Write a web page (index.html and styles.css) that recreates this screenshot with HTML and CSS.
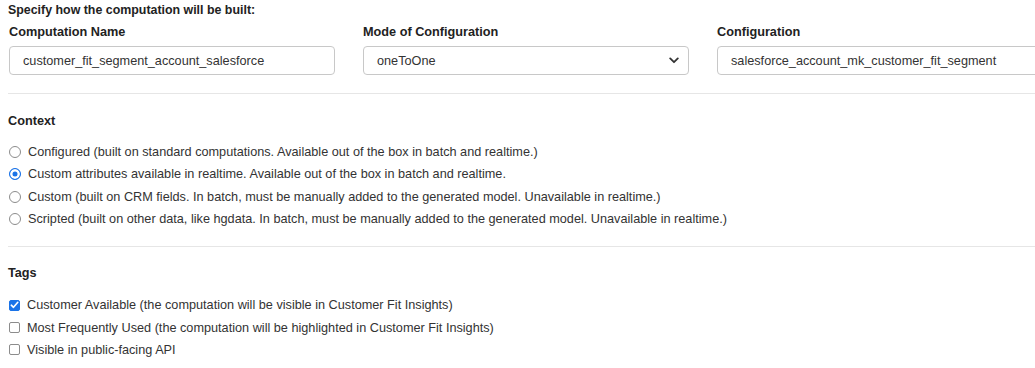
FILE: index.html
```html
<!DOCTYPE html>
<html>
<head>
<meta charset="utf-8">
<link rel="stylesheet" href="styles.css">
</head>
<body>
<div class="page">
  <div class="intro">Specify how the computation will be built:</div>
  <div class="fields">
    <div class="field">
      <label class="label">Computation Name</label>
      <input class="control" type="text" value="customer_fit_segment_account_salesforce">
    </div>
    <div class="field">
      <label class="label">Mode of Configuration</label>
      <div class="select">
        <span>oneToOne</span>
        <svg class="chev" width="10" height="7" viewBox="0 0 10 7"><path d="M1.2 1.4 L5 5.2 L8.8 1.4" fill="none" stroke="#333" stroke-width="1.8" stroke-linecap="round" stroke-linejoin="round"/></svg>
      </div>
    </div>
    <div class="field">
      <label class="label">Configuration</label>
      <input class="control" type="text" value="salesforce_account_mk_customer_fit_segment">
    </div>
  </div>
  <hr class="sep">
  <div class="section-title context-title">Context</div>
  <div class="options">
    <label class="option"><span class="radio"></span>Configured (built on standard computations. Available out of the box in batch and realtime.)</label>
    <label class="option"><span class="radio checked"></span>Custom attributes available in realtime. Available out of the box in batch and realtime.</label>
    <label class="option"><span class="radio"></span>Custom (built on CRM fields. In batch, must be manually added to the generated model. Unavailable in realtime.)</label>
    <label class="option"><span class="radio"></span>Scripted (built on other data, like hgdata. In batch, must be manually added to the generated model. Unavailable in realtime.)</label>
  </div>
  <hr class="sep sep2">
  <div class="section-title tags-title">Tags</div>
  <div class="options tags">
    <label class="option"><span class="check checked"><svg width="9" height="8" viewBox="0 0 9 8"><path d="M1.3 4.2 L3.5 6.3 L7.8 1.3" fill="none" stroke="#fff" stroke-width="1.6" stroke-linecap="round" stroke-linejoin="round"/></svg></span>Customer Available (the computation will be visible in Customer Fit Insights)</label>
    <label class="option"><span class="check"></span>Most Frequently Used (the computation will be highlighted in Customer Fit Insights)</label>
    <label class="option"><span class="check"></span>Visible in public-facing API</label>
  </div>
</div>
</body>
</html>
```

FILE: styles.css
```css
html, body {
  margin: 0;
  padding: 0;
  background: #fff;
  overflow: hidden;
}
body {
  font-family: "Liberation Sans", Arial, sans-serif;
  font-size: 12.7px;
  color: #333;
}
.page {
  padding: 1px 0 0 8px;
}
.intro, .label, .section-title {
  font-weight: bold;
  line-height: 18px;
  color: #222;
}
.intro {
  font-size: 12.4px;
}
.fields {
  display: grid;
  grid-template-columns: 326px 326px 326px;
  column-gap: 28px;
  margin-top: 4px;
  padding-left: 1px;
  overflow: hidden;
}
.field {
  display: flex;
  flex-direction: column;
  min-width: 0;
}
.label {
  display: block;
  margin-bottom: 5px;
}
.control, .select {
  box-sizing: border-box;
  height: 29px;
  width: 326px;
  border: 1px solid #c8c8c8;
  border-radius: 4px;
  font-family: "Liberation Sans", Arial, sans-serif;
  font-size: 12.7px;
  color: #333;
  padding: 0 0 0 13px;
  margin: 0;
  outline: none;
  background: #fff;
}
.select {
  display: flex;
  align-items: center;
  justify-content: space-between;
  padding-right: 9px;
}
.chev {
  display: block;
}
.sep {
  border: 0;
  border-top: 1px solid #e6e6e6;
  margin: 18px 0 0 0;
}
.sep2 {
  margin-top: 16px;
}
.context-title {
  margin-top: 18px;
}
.tags-title {
  margin-top: 17px;
}
.options {
  margin-top: 11px;
  display: flex;
  flex-direction: column;
}
.options.tags {
  margin-top: 12px;
}
.option {
  display: flex;
  align-items: center;
  height: 22.3px;
  white-space: nowrap;
}
.radio {
  box-sizing: border-box;
  width: 12px;
  height: 12px;
  border: 1px solid #8c8c8c;
  border-radius: 50%;
  margin: 0 7px 0 1px;
  background: #fff;
  flex: none;
}
.radio.checked {
  border-color: #1a73e8;
  background: #1a73e8;
  box-shadow: inset 0 0 0 2.5px #fff;
  border-width: 1.5px;
}
.check {
  box-sizing: border-box;
  width: 11px;
  height: 11px;
  border: 1px solid #8c8c8c;
  border-radius: 2px;
  margin: 0 7px 0 1px;
  background: #fff;
  flex: none;
  display: flex;
  align-items: center;
  justify-content: center;
}
.check.checked {
  background: #1a73e8;
  border-color: #1a73e8;
}
.check svg {
  display: block;
}
```
